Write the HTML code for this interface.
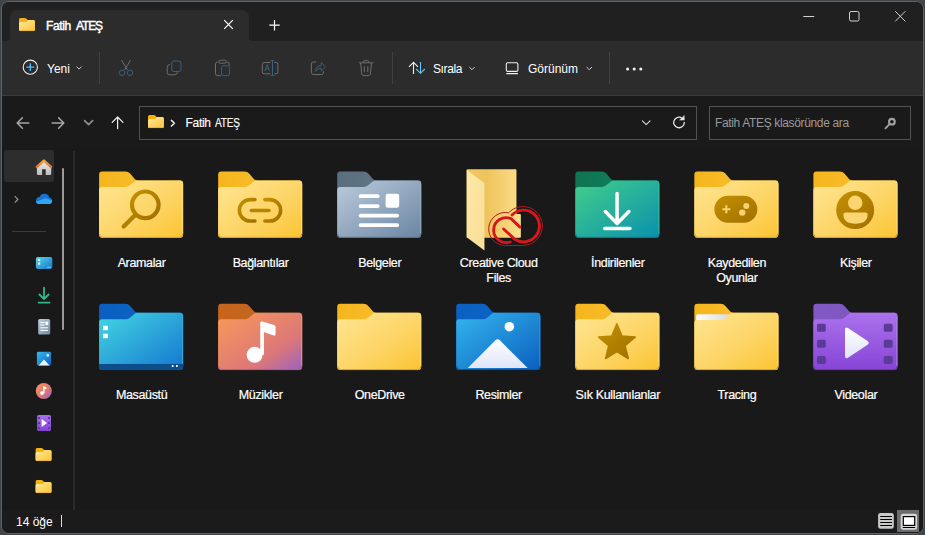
<!DOCTYPE html>
<html><head><meta charset="utf-8">
<style>
*{margin:0;padding:0;box-sizing:border-box}
html,body{width:925px;height:535px;overflow:hidden;background:#3f4549;font-family:"Liberation Sans",sans-serif;color:#fff}
#frame{position:absolute;left:1px;top:1px;width:923px;height:533px;border:1px solid #5d6468;border-radius:8px}
#c{position:absolute;left:0;top:0;width:925px;height:535px;clip-path:inset(2px 2px 2px 2px round 7px);background:#1a1a1a}
.a{position:absolute}
.t{position:absolute;white-space:nowrap;font-size:12px;line-height:14px}
.lb{position:absolute;width:119px;text-align:center;white-space:nowrap;font-size:12.5px;line-height:14px;letter-spacing:-0.35px;color:#fff;-webkit-text-stroke:0.2px #fff}
.sep{position:absolute;width:1px;background:#404040}
svg{position:absolute;overflow:visible}
</style></head><body>
<div id="frame"></div>
<div id="c">
 <!-- title bar -->
 <div class="a" style="left:0;top:0;width:925px;height:41px;background:#202020"></div>
 <div class="a" style="left:10px;top:10px;width:239px;height:31px;background:#2c2c2c;border-radius:7px 7px 0 0"></div>
 <svg style="left:0;top:0" width="925" height="45">
  <path d="M6,41 Q10,41 10,37 L10,41 Z" fill="#2c2c2c"/>
  <path d="M253,41 Q249,41 249,37 L249,41 Z" fill="#2c2c2c"/>
 </svg>
 <!-- toolbar -->
 <div class="a" style="left:0;top:41px;width:925px;height:55px;background:#2c2c2c;border-bottom:1px solid #3b3b3b"></div>
 <div class="sep" style="left:99px;top:52px;height:32px"></div>
 <div class="sep" style="left:392px;top:52px;height:32px"></div>
 <div class="sep" style="left:609px;top:52px;height:32px"></div>
 <div class="t" style="left:46px;top:19px;letter-spacing:-0.35px;word-spacing:2px;-webkit-text-stroke:0.45px #fff">Fatih <span style="letter-spacing:-1.1px">ATEŞ</span></div>
 <div class="t" style="left:47px;top:62px">Yeni</div>
 <div class="t" style="left:433px;top:62px;letter-spacing:-0.4px">Sırala</div>
 <div class="t" style="left:528px;top:62px">Görünüm</div>
 <!-- address row -->
 <div class="a" style="left:139px;top:106px;width:558px;height:34px;border:1px solid #525252;background:#1a1a1a"></div>
 <div class="a" style="left:709px;top:106px;width:202px;height:34px;border:1px solid #525252;background:#1a1a1a"></div>
 <div class="t" style="left:185.5px;top:116px;letter-spacing:-0.3px;word-spacing:1px;-webkit-text-stroke:0.15px #fff">Fatih <span style="display:inline-block;transform:scaleX(0.84);transform-origin:0 0;letter-spacing:-0.2px">ATEŞ</span></div>
 <div class="t" style="left:715px;top:116px;color:#9a9a9a;letter-spacing:-0.35px">Fatih ATEŞ klasöründe ara</div>
 <!-- content bg -->
 <div class="a" style="left:0;top:148.5px;width:925px;height:361px;background:#191919"></div>
 <!-- nav pane -->
 <div class="a" style="left:4px;top:150px;width:50px;height:32px;background:#2d2d2d;border-radius:2px"></div>
 <div class="a" style="left:62px;top:168px;width:2px;height:162px;background:#9b9b9b;border-radius:1px"></div>
 <div class="a" style="left:72.5px;top:150.5px;width:2px;height:359px;background:#2a2a2a"></div>
 <div class="a" style="left:12px;top:231px;width:34px;height:1px;background:#3a3a3a"></div>
 <!-- status -->
 <div class="a" style="left:0;top:509.5px;width:925px;height:26px;background:#1b1b1b"></div>
 <div class="t" style="left:16px;top:515px">14 öğe</div>
 <div class="a" style="left:61px;top:515px;width:1px;height:12px;background:#ddd"></div>
<svg style="left:0;top:0" width="925" height="535">
<defs>
 <linearGradient id="sfb" x1="0" y1="0" x2="1" y2="1"><stop offset="0" stop-color="#ffe89a"/><stop offset="1" stop-color="#fcc43a"/></linearGradient>
 <linearGradient id="sdesk" x1="0" y1="0" x2="1" y2="1"><stop offset="0" stop-color="#4fd8e6"/><stop offset="1" stop-color="#1676d0"/></linearGradient>
 <linearGradient id="sdoc" x1="0" y1="0" x2="1" y2="1"><stop offset="0" stop-color="#c2d0e0"/><stop offset="1" stop-color="#6d88a4"/></linearGradient>
 <linearGradient id="spic" x1="0" y1="0" x2="1" y2="1"><stop offset="0" stop-color="#36b9f0"/><stop offset="1" stop-color="#0b61c0"/></linearGradient>
 <linearGradient id="smus" x1="0" y1="0" x2="1" y2="1"><stop offset="0" stop-color="#f59a58"/><stop offset="0.6" stop-color="#d9777c"/><stop offset="1" stop-color="#9060c6"/></linearGradient>
 <linearGradient id="svid" x1="0" y1="0" x2="0" y2="1"><stop offset="0" stop-color="#a870ea"/><stop offset="1" stop-color="#8544d4"/></linearGradient>
 <linearGradient id="shome" x1="0" y1="0" x2="0" y2="1"><stop offset="0" stop-color="#e8e8e8"/><stop offset="1" stop-color="#bdbdbd"/></linearGradient>
 <linearGradient id="sroof" x1="0" y1="0" x2="0" y2="1"><stop offset="0" stop-color="#f4a447"/><stop offset="1" stop-color="#d9732c"/></linearGradient>
 <g id="smallfolder">
  <path d="M0,1.6 Q0,0 1.6,0 H5.8 Q6.6,0 7.2,0.6 L8.6,2.1 H14.3 Q15.9,2.1 15.9,3.7 V11.5 Q15.9,13.1 14.3,13.1 H1.6 Q0,13.1 0,11.5 Z" fill="#f3b20e"/>
  <path d="M0,5.6 Q0,4.1 1.5,4.1 H6.4 Q7.2,4.1 7.8,3.4 L8.6,2.1 H14.3 Q15.9,2.1 15.9,3.7 V11.5 Q15.9,13.1 14.3,13.1 H1.6 Q0,13.1 0,11.5 Z" fill="url(#sfb)"/>
  <path d="M1.2,12.6 H14.7" stroke="#e3a82c" stroke-width="0.7"/>
 </g>
</defs>
<!-- tab folder -->
<use href="#smallfolder" x="19" y="18"/>
<!-- tab close / plus -->
<g stroke="#ffffff" stroke-width="1.2" fill="none">
 <path d="M224.2,20.2 L232.8,28.8 M232.8,20.2 L224.2,28.8"/>
 <path d="M269.3,25.2 H279.7 M274.5,20 V30.4"/>
</g>
<!-- window controls -->
<g stroke="#d0d0d0" stroke-width="1" fill="none">
 <path d="M803.3,16.5 H814.2"/>
 <rect x="849.5" y="11.5" width="9.5" height="9.5" rx="1.5"/>
 <path d="M895.2,11.2 L905.4,21.4 M905.4,11.2 L895.2,21.4"/>
</g>
<!-- New -->
<circle cx="30.3" cy="67.2" r="7.1" fill="none" stroke="#f0f0f0" stroke-width="1.1"/>
<path d="M26.4,67.2 H34.2 M30.3,63.3 V71.1" stroke="#4cc2ff" stroke-width="1.3"/>
<path d="M76.6,66.6 L79.1,69.1 L81.6,66.6" stroke="#cfcfcf" stroke-width="1" fill="none"/>
<!-- disabled icons -->
<g fill="none" stroke-width="1">
 <!-- scissors -->
 <path d="M121.5,60 L127.4,70 M130.5,60 L124.6,70" stroke="#6e6e6e"/>
 <circle cx="122.1" cy="72.8" r="2.7" stroke="#36617f"/>
 <circle cx="130" cy="72.8" r="2.7" stroke="#36617f"/>
 <!-- copy -->
 <rect x="171.8" y="61" width="9.2" height="10.5" rx="2" stroke="#36617f"/>
 <path d="M169.8,64.3 Q167.2,64.8 167.2,67.5 V72.6 Q167.2,74.8 169.6,74.8 H174.3 Q176.9,74.8 177.6,72.1" stroke="#6e6e6e"/>
 <!-- paste -->
 <path d="M218.6,62 H217.4 Q215.5,62 215.5,64 V73.6 Q215.5,75.6 217.5,75.6 H220.8 M226.4,62 H227.4 Q229.2,62 229.2,64 V65.6" stroke="#6e6e6e"/>
 <rect x="218.8" y="60.2" width="7.4" height="3" rx="1.4" stroke="#6e6e6e"/>
 <rect x="221.6" y="65.8" width="7.8" height="9.8" rx="1.6" stroke="#36617f"/>
 <!-- rename -->
 <path d="M270.4,62.5 H264.2 Q262.3,62.5 262.3,64.5 V71.8 Q262.3,73.8 264.2,73.8 H270.4 M274.6,62.5 H276 Q277.9,62.5 277.9,64.5 V71.8 Q277.9,73.8 276,73.8 H274.6" stroke="#6e6e6e"/>
 <path d="M272.5,60.5 V75.6 M270.6,60.6 H274.4 M270.6,75.5 H274.4" stroke="#36617f"/>
 <path d="M264.8,71 L267.1,64.6 L269.4,71 M265.6,68.9 H268.6" stroke="#36617f" stroke-width="1"/>
 <!-- share -->
 <path d="M316.2,62 H313.4 Q311.4,62 311.4,64 V72.6 Q311.4,74.6 313.4,74.6 H321.4 Q323.4,74.6 323.4,72.6 V71.2" stroke="#6e6e6e"/>
 <path d="M315.5,71.3 Q315.8,65.6 321.2,65.6 V62.6 L325.6,66.8 L321.2,71 V68.2 Q317.7,68.3 315.5,71.3 Z" stroke="#36617f"/>
 <!-- delete -->
 <path d="M358.9,62.8 H373.2 M363.2,62.6 Q363.2,60.6 365,60.6 H367.1 Q368.9,60.6 368.9,62.6 M360.6,63 L361.8,73.9 Q362,75.6 363.8,75.6 H368.3 Q370.1,75.6 370.3,73.9 L371.5,63 M364.3,66.2 V72.2 M367.8,66.2 V72.2" stroke="#6e6e6e"/>
</g>
<!-- sort -->
<g fill="none" stroke-width="1.15">
 <path d="M413.5,73.9 V62.4 M409,66.9 L413.5,62.4 L418,66.9" stroke="#eeeeee" stroke-width="1.1"/>
 <path d="M420.5,62 V73.3 M416.2,69 L420.5,73.3 L424.8,69" stroke="#62c3f5" stroke-width="1.1"/>
 <path d="M469.3,67 L472,69.7 L474.7,67" stroke="#cfcfcf" stroke-width="1"/>
 <rect x="506.3" y="62.8" width="11.6" height="8.6" rx="1.4" stroke="#f0f0f0" stroke-width="1.1"/>
 <path d="M506.3,73.6 H517.9" stroke="#f0f0f0" stroke-width="1.1"/>
 <path d="M586.6,67 L589.3,69.7 L592,67" stroke="#cfcfcf" stroke-width="1"/>
</g>
<g fill="#f0f0f0"><circle cx="627.6" cy="69" r="1.55"/><circle cx="634.2" cy="69" r="1.55"/><circle cx="640.8" cy="69" r="1.55"/></g>
<!-- nav arrows -->
<g fill="none" stroke-width="1.2" stroke-linecap="round" stroke-linejoin="round">
 <path d="M28.8,123 H17.4 M22.4,117.8 L17.2,123 L22.4,128.2" stroke="#a6a6a6" stroke-width="1.6"/>
 <path d="M52.2,123 H63.6 M58.6,117.8 L63.8,123 L58.6,128.2" stroke="#a6a6a6" stroke-width="1.6"/>
 <path d="M84.6,120.6 L88.6,124.6 L92.6,120.6" stroke="#8e8e8e" stroke-width="1.7"/>
 <path d="M117.6,128.6 V117 M112.2,122.4 L117.6,117 L123,122.4" stroke="#f0f0f0"/>
 <path d="M171.4,120.4 L174.4,123.2 L171.4,126" stroke="#f0f0f0" stroke-width="1.5"/>
 <path d="M642.4,120.8 L646.2,124.6 L650,120.8" stroke="#d0d0d0"/>
 <path d="M682.2,118.2 A5.3,5.3 0 1 0 684.3,122.4" stroke="#e8e8e8" stroke-width="1.3"/>
 <path d="M684.2,115.9 V120 H680 Z" fill="#e8e8e8" stroke="#e8e8e8" stroke-width="0.6"/>
 <circle cx="891.9" cy="121.7" r="2.85" stroke="#a2a2a2" stroke-width="2.1"/>
 <path d="M889,124.7 L885.5,128.3" stroke="#a2a2a2" stroke-width="1.9"/>
</g>
<use href="#smallfolder" x="148" y="115"/>
<!-- nav pane icons -->
<path d="M36.9,166.5 V173.4 Q36.9,174.9 38.4,174.9 H42.1 V169.2 H45.7 V174.9 H49.7 Q51.2,174.9 51.2,173.4 V166.5 L43.9,161.6 Z" fill="url(#shome)"/>
<path d="M36.8,166.9 L43.9,160.6 L51,166.9" fill="none" stroke="url(#sroof)" stroke-width="2.5" stroke-linecap="round" stroke-linejoin="round"/>
<path d="M14.8,196.2 L17.9,199.4 L14.8,202.6" fill="none" stroke="#9a9a9a" stroke-width="1.2"/>
<path d="M39,204 C36.8,204 35.9,202.4 35.9,200.8 C35.9,198.6 37.6,197 39.6,197 C40.4,194.9 42.3,193.8 44.5,193.8 C47,193.8 48.8,195.4 49.4,197.6 C51.2,197.9 52.2,199.3 52.2,200.9 C52.2,202.6 51,204 49,204 Z" fill="#1774d2"/>
<path d="M39,204 C37,204 36,202.8 35.9,201.7 L45.6,198.3 L52.2,200.6 C52.2,202.6 51,204 49,204 Z" fill="#30a6ee"/>
<rect x="35.9" y="257" width="16.4" height="11.9" rx="1.8" fill="url(#sdesk)"/>
<rect x="38" y="259" width="2.2" height="2" fill="#fff"/><rect x="38" y="262.6" width="2.2" height="2" fill="#fff"/>
<rect x="47.6" y="266.8" width="1" height="1" fill="#fff"/><rect x="49.6" y="266.8" width="1" height="1" fill="#fff"/>
<g fill="none" stroke="#2fb68a" stroke-width="1.8" stroke-linecap="round" stroke-linejoin="round">
 <path d="M44,287.6 V299 M39.4,294.5 L44,299 L48.6,294.5 M38.6,302.6 H49.5"/>
</g>
<rect x="38.2" y="319" width="12" height="15.6" rx="1.6" fill="url(#sdoc)"/>
<path d="M40.4,322.5 H44.5 M40.4,325 H44.5 M40.4,327.8 H48 M40.4,330.4 H48" stroke="#fff" stroke-width="1"/>
<rect x="45.4" y="321.6" width="2.8" height="3.4" fill="#fff"/>
<rect x="36.9" y="351.8" width="14.2" height="13.7" rx="1.4" fill="url(#spic)"/>
<circle cx="47.8" cy="355.4" r="1.3" fill="#fff"/>
<path d="M38.6,365.5 L44,359.4 L49.5,365.5 Z" fill="#eef2ff"/>
<circle cx="43.8" cy="391" r="8" fill="url(#smus)"/>
<path d="M42,395 A1.9,1.9 0 1 1 42,391.2 A1.9,1.9 0 1 1 42,395 Z M43.3,393 V386.2 L46.3,387.2 V389.3 L44.6,388.7 V393 Z" fill="#fff"/>
<rect x="37.1" y="415" width="13.9" height="16" rx="1.6" fill="url(#svid)"/>
<g fill="#5b3a98"><rect x="38.1" y="417" width="1.8" height="2"/><rect x="38.1" y="422" width="1.8" height="2"/><rect x="38.1" y="427" width="1.8" height="2"/><rect x="48.2" y="417" width="1.8" height="2"/><rect x="48.2" y="422" width="1.8" height="2"/><rect x="48.2" y="427" width="1.8" height="2"/></g>
<path d="M41.6,419 L47,423 L41.6,427 Z" fill="#fff"/>
<use href="#smallfolder" x="35.6" y="448"/>
<use href="#smallfolder" x="35.6" y="480"/>
<!-- status view buttons -->
<rect x="878.1" y="512.9" width="15.7" height="15.9" rx="2.4" fill="#c8c8c8"/>
<g stroke="#000" stroke-width="1"><path d="M880.2,516.5 H892 M880.2,519.5 H892 M880.2,522.5 H892 M880.2,525.5 H892"/></g>
<rect x="897" y="510" width="22" height="22" fill="#6b6b6b"/>
<rect x="900.7" y="513.7" width="16.4" height="16.1" rx="2.4" fill="#d6d6d6"/>
<rect x="903.3" y="516.6" width="11.4" height="8.8" fill="#fff" stroke="#000" stroke-width="1.2"/>
<path d="M902.7,527.5 H915.2" stroke="#000" stroke-width="1"/>
</svg>

<svg style="left:0;top:0" width="925" height="535"><defs><linearGradient id="yb" x1="0" y1="0" x2="1" y2="0"><stop offset="0" stop-color="#f5b51c"/><stop offset="1" stop-color="#fcc53a"/></linearGradient><linearGradient id="yf" x1="0" y1="0" x2="1" y2="1"><stop offset="0" stop-color="#ffe592"/><stop offset="0.55" stop-color="#fdd567"/><stop offset="1" stop-color="#fbc432"/></linearGradient><linearGradient id="bb" x1="0" y1="0" x2="1" y2="0"><stop offset="0" stop-color="#5a6f7e"/><stop offset="1" stop-color="#657a8a"/></linearGradient><linearGradient id="bf" x1="0" y1="0" x2="1" y2="1"><stop offset="0" stop-color="#bccbdc"/><stop offset="1" stop-color="#6a86a3"/></linearGradient><linearGradient id="db" x1="0" y1="0" x2="1" y2="0"><stop offset="0" stop-color="#0f7552"/><stop offset="1" stop-color="#128060"/></linearGradient><linearGradient id="df" x1="0" y1="0" x2="1" y2="1"><stop offset="0" stop-color="#43cf8a"/><stop offset="1" stop-color="#0a90ad"/></linearGradient><linearGradient id="mb" x1="0" y1="0" x2="1" y2="0"><stop offset="0" stop-color="#0a5fc0"/><stop offset="1" stop-color="#0e68c8"/></linearGradient><linearGradient id="mf" x1="0" y1="0" x2="1" y2="1"><stop offset="0" stop-color="#44d6e2"/><stop offset="1" stop-color="#1476d0"/></linearGradient><linearGradient id="ub" x1="0" y1="0" x2="1" y2="0"><stop offset="0" stop-color="#c9641a"/><stop offset="1" stop-color="#b8682a"/></linearGradient><linearGradient id="uf" x1="0" y1="0" x2="1" y2="1"><stop offset="0" stop-color="#f89a58"/><stop offset="0.68" stop-color="#dc7779"/><stop offset="1" stop-color="#9a62c2"/></linearGradient><linearGradient id="pb" x1="0" y1="0" x2="1" y2="0"><stop offset="0" stop-color="#0a61c2"/><stop offset="1" stop-color="#0b65c6"/></linearGradient><linearGradient id="pf" x1="0" y1="0" x2="1" y2="1"><stop offset="0" stop-color="#34b6ee"/><stop offset="1" stop-color="#0b5fbe"/></linearGradient><linearGradient id="vb" x1="0" y1="0" x2="1" y2="0"><stop offset="0" stop-color="#8358c6"/><stop offset="1" stop-color="#7a56b8"/></linearGradient><linearGradient id="vf" x1="0" y1="0" x2="0" y2="1"><stop offset="0" stop-color="#aa72ec"/><stop offset="1" stop-color="#8744d6"/></linearGradient><linearGradient id="glyph" x1="0" y1="0" x2="1" y2="1"><stop offset="0" stop-color="#c49000"/><stop offset="1" stop-color="#a07000"/></linearGradient><linearGradient id="white" x1="0" y1="0" x2="0" y2="1"><stop offset="0" stop-color="#ffffff"/><stop offset="1" stop-color="#dfe4f8"/></linearGradient><linearGradient id="paper" x1="0" y1="0" x2="1" y2="0"><stop offset="0" stop-color="#ffffff"/><stop offset="1" stop-color="#d9d9d9"/></linearGradient><linearGradient id="ccfront" x1="0" y1="0" x2="1" y2="1"><stop offset="0" stop-color="#fde8a8"/><stop offset="1" stop-color="#f9df96"/></linearGradient><linearGradient id="ccback" x1="0" y1="0" x2="1" y2="0"><stop offset="0" stop-color="#f3c85c"/><stop offset="0.36" stop-color="#edc35c"/><stop offset="1" stop-color="#fddf8c"/></linearGradient></defs><g transform="translate(99.1,171.4)"><path d="M0,3 Q0,0 3,0 H26 C28.4,0 29.7,0.7 31,2.2 L35,6.9 C36.1,8.3 37.1,9 39,9 H81 Q84,9 84,12 V62.9 Q84,66.4 80.5,66.4 H3.5 Q0,66.4 0,62.9 Z" fill="url(#yb)"/><path d="M0,18.5 Q0,15.5 3,15.5 H26.5 C28.5,15.5 29.8,14.9 31.2,13.7 L35.3,10.3 C36.3,9.4 37.3,9 39,9 H81 Q84,9 84,12 V62.9 Q84,66.4 80.5,66.4 H3.5 Q0,66.4 0,62.9 Z" fill="url(#yf)"/><path d="M0.5,62.6 Q0.5,65.9 3.5,65.9 H80.5 Q83.5,65.9 83.5,62.6" fill="none" stroke="#dc9e24" stroke-width="1"/><path d="M83.5,12.5 V62" stroke="#ffe184" stroke-width="1" opacity="0.8"/><circle cx="46.2" cy="33.4" r="13.3" fill="none" stroke="url(#glyph)" stroke-width="4.2"/><path d="M36.6,43 L24.5,55.2" stroke="url(#glyph)" stroke-width="4.2" stroke-linecap="round"/></g><g transform="translate(218.15,171.4)"><path d="M0,3 Q0,0 3,0 H26 C28.4,0 29.7,0.7 31,2.2 L35,6.9 C36.1,8.3 37.1,9 39,9 H81 Q84,9 84,12 V62.9 Q84,66.4 80.5,66.4 H3.5 Q0,66.4 0,62.9 Z" fill="url(#yb)"/><path d="M0,18.5 Q0,15.5 3,15.5 H26.5 C28.5,15.5 29.8,14.9 31.2,13.7 L35.3,10.3 C36.3,9.4 37.3,9 39,9 H81 Q84,9 84,12 V62.9 Q84,66.4 80.5,66.4 H3.5 Q0,66.4 0,62.9 Z" fill="url(#yf)"/><path d="M0.5,62.6 Q0.5,65.9 3.5,65.9 H80.5 Q83.5,65.9 83.5,62.6" fill="none" stroke="#dc9e24" stroke-width="1"/><path d="M83.5,12.5 V62" stroke="#ffe184" stroke-width="1" opacity="0.8"/><path d="M36.8,28.2 H31.9 A10.7,10.7 0 0 0 31.9,49.6 H36.8" fill="none" stroke="url(#glyph)" stroke-width="3.6" stroke-linecap="round"/><path d="M46.7,28.2 H51.8 A10.7,10.7 0 0 1 51.8,49.6 H46.7" fill="none" stroke="url(#glyph)" stroke-width="3.6" stroke-linecap="round"/><path d="M33.2,39.1 H50.8" stroke="#b88500" stroke-width="3.6" stroke-linecap="round"/></g><g transform="translate(337.2,171.4)"><path d="M0,3 Q0,0 3,0 H26 C28.4,0 29.7,0.7 31,2.2 L35,6.9 C36.1,8.3 37.1,9 39,9 H81 Q84,9 84,12 V62.9 Q84,66.4 80.5,66.4 H3.5 Q0,66.4 0,62.9 Z" fill="url(#bb)"/><path d="M0,18.5 Q0,15.5 3,15.5 H26.5 C28.5,15.5 29.8,14.9 31.2,13.7 L35.3,10.3 C36.3,9.4 37.3,9 39,9 H81 Q84,9 84,12 V62.9 Q84,66.4 80.5,66.4 H3.5 Q0,66.4 0,62.9 Z" fill="url(#bf)"/><path d="M0.5,62.6 Q0.5,65.9 3.5,65.9 H80.5 Q83.5,65.9 83.5,62.6" fill="none" stroke="#56708a" stroke-width="1"/><path d="M83.5,12.5 V62" stroke="#9fb4c8" stroke-width="1" opacity="0.8"/><g stroke="#fff" stroke-width="3.8" stroke-linecap="round"><path d="M23.3,24.8 H40.5 M23.3,34.7 H40.5 M23.3,44.2 H60 M23.3,53.8 H60"/></g><rect x="48.4" y="22.3" width="13.6" height="14" rx="2.2" fill="#fff"/></g><g transform="translate(456.25,171.4)"><path d="M11.5,-2.1 H59.2 Q60.2,-2.1 60.2,-1.1 V42.6 H63.6 Q64.6,42.6 64.6,43.6 V65.3 Q64.6,66.3 63.6,66.3 H10.45 V-1.1 Q10.45,-2.1 11.5,-2.1 Z" fill="url(#ccback)"/><path d="M10.45,-1.6 L28.2,11.7 V79.2 L10.45,65.9 Z" fill="url(#ccfront)"/><path d="M49.05,74.1 H66.95 A19.5,19.5 0 1 0 52.31,41.44 A16.5,16.5 0 1 0 49.05,74.1 Z" fill="none" stroke="#b8141a" stroke-width="1"/><g fill="none" stroke="#d8161d" stroke-width="2.9" stroke-linecap="round"><path d="M55.75,43.6 A15.9,15.9 0 1 1 58.55,67.9 L47.35,57.6"/><path d="M63.75,55.7 L54.85,47.3 A12.5,12.5 0 1 0 53.95,70.6"/></g></g><g transform="translate(575.3,171.4)"><path d="M0,3 Q0,0 3,0 H26 C28.4,0 29.7,0.7 31,2.2 L35,6.9 C36.1,8.3 37.1,9 39,9 H81 Q84,9 84,12 V62.9 Q84,66.4 80.5,66.4 H3.5 Q0,66.4 0,62.9 Z" fill="url(#db)"/><path d="M0,18.5 Q0,15.5 3,15.5 H26.5 C28.5,15.5 29.8,14.9 31.2,13.7 L35.3,10.3 C36.3,9.4 37.3,9 39,9 H81 Q84,9 84,12 V62.9 Q84,66.4 80.5,66.4 H3.5 Q0,66.4 0,62.9 Z" fill="url(#df)"/><path d="M0.5,62.6 Q0.5,65.9 3.5,65.9 H80.5 Q83.5,65.9 83.5,62.6" fill="none" stroke="#0b7a8a" stroke-width="1"/><path d="M83.5,12.5 V62" stroke="#3cc0a0" stroke-width="1" opacity="0.8"/><g stroke="#fff" stroke-width="3.5" stroke-linecap="round" stroke-linejoin="round" fill="none"><path d="M41.8,22.2 V51 M30,40.2 L41.8,52 L53.6,40.2"/><path d="M29.5,57 H54.6"/></g></g><g transform="translate(694.35,171.4)"><path d="M0,3 Q0,0 3,0 H26 C28.4,0 29.7,0.7 31,2.2 L35,6.9 C36.1,8.3 37.1,9 39,9 H81 Q84,9 84,12 V62.9 Q84,66.4 80.5,66.4 H3.5 Q0,66.4 0,62.9 Z" fill="url(#yb)"/><path d="M0,18.5 Q0,15.5 3,15.5 H26.5 C28.5,15.5 29.8,14.9 31.2,13.7 L35.3,10.3 C36.3,9.4 37.3,9 39,9 H81 Q84,9 84,12 V62.9 Q84,66.4 80.5,66.4 H3.5 Q0,66.4 0,62.9 Z" fill="url(#yf)"/><path d="M0.5,62.6 Q0.5,65.9 3.5,65.9 H80.5 Q83.5,65.9 83.5,62.6" fill="none" stroke="#dc9e24" stroke-width="1"/><path d="M83.5,12.5 V62" stroke="#ffe184" stroke-width="1" opacity="0.8"/><rect x="20" y="24.4" width="43" height="27" rx="13.5" fill="url(#glyph)"/><path d="M28,37.9 H36 M32,33.9 V41.9" stroke="#f7d270" stroke-width="2" /><circle cx="51.9" cy="34.6" r="3" fill="#f7d270"/><circle cx="47.9" cy="41.2" r="3.2" fill="#f7d270"/></g><g transform="translate(813.4,171.4)"><path d="M0,3 Q0,0 3,0 H26 C28.4,0 29.7,0.7 31,2.2 L35,6.9 C36.1,8.3 37.1,9 39,9 H81 Q84,9 84,12 V62.9 Q84,66.4 80.5,66.4 H3.5 Q0,66.4 0,62.9 Z" fill="url(#yb)"/><path d="M0,18.5 Q0,15.5 3,15.5 H26.5 C28.5,15.5 29.8,14.9 31.2,13.7 L35.3,10.3 C36.3,9.4 37.3,9 39,9 H81 Q84,9 84,12 V62.9 Q84,66.4 80.5,66.4 H3.5 Q0,66.4 0,62.9 Z" fill="url(#yf)"/><path d="M0.5,62.6 Q0.5,65.9 3.5,65.9 H80.5 Q83.5,65.9 83.5,62.6" fill="none" stroke="#dc9e24" stroke-width="1"/><path d="M83.5,12.5 V62" stroke="#ffe184" stroke-width="1" opacity="0.8"/><circle cx="41.8" cy="38.7" r="19" fill="url(#glyph)"/><circle cx="41.8" cy="31.4" r="7.2" fill="#fbd56f"/><path d="M30,43.1 Q30,41.1 32,41.1 H52.2 Q54.2,41.1 54.2,43.1 Q54.2,52.3 42.1,52.3 Q30,52.3 30,43.1 Z" fill="#fbd56f"/></g><g transform="translate(99.1,303.7)"><path d="M0,3 Q0,0 3,0 H26 C28.4,0 29.7,0.7 31,2.2 L35,6.9 C36.1,8.3 37.1,9 39,9 H81 Q84,9 84,12 V62.9 Q84,66.4 80.5,66.4 H3.5 Q0,66.4 0,62.9 Z" fill="url(#mb)"/><path d="M0,18.5 Q0,15.5 3,15.5 H26.5 C28.5,15.5 29.8,14.9 31.2,13.7 L35.3,10.3 C36.3,9.4 37.3,9 39,9 H81 Q84,9 84,12 V62.9 Q84,66.4 80.5,66.4 H3.5 Q0,66.4 0,62.9 Z" fill="url(#mf)"/><path d="M0.5,62.6 Q0.5,65.9 3.5,65.9 H80.5 Q83.5,65.9 83.5,62.6" fill="none" stroke="#0d4a86" stroke-width="1"/><path d="M83.5,12.5 V62" stroke="#3ab0e0" stroke-width="1" opacity="0.8"/><path d="M0,60.2 H84 V63.4 Q84,66.4 81,66.4 H3 Q0,66.4 0,63.4 Z" fill="#0d4e8a"/><rect x="3.9" y="22" width="4.8" height="4.5" fill="#fff"/><rect x="3.9" y="30" width="4.8" height="4.5" fill="#fff"/><rect x="72.7" y="61.4" width="1.8" height="1.8" fill="#fff"/><rect x="76.9" y="61.4" width="1.8" height="1.8" fill="#fff"/></g><g transform="translate(218.15,303.7)"><path d="M0,3 Q0,0 3,0 H26 C28.4,0 29.7,0.7 31,2.2 L35,6.9 C36.1,8.3 37.1,9 39,9 H81 Q84,9 84,12 V62.9 Q84,66.4 80.5,66.4 H3.5 Q0,66.4 0,62.9 Z" fill="url(#ub)"/><path d="M0,18.5 Q0,15.5 3,15.5 H26.5 C28.5,15.5 29.8,14.9 31.2,13.7 L35.3,10.3 C36.3,9.4 37.3,9 39,9 H81 Q84,9 84,12 V62.9 Q84,66.4 80.5,66.4 H3.5 Q0,66.4 0,62.9 Z" fill="url(#uf)"/><path d="M0.5,62.6 Q0.5,65.9 3.5,65.9 H80.5 Q83.5,65.9 83.5,62.6" fill="none" stroke="#b06078" stroke-width="1"/><path d="M83.5,12.5 V62" stroke="#eea08c" stroke-width="1" opacity="0.8"/><circle cx="36.5" cy="51.1" r="8" fill="#fff"/><path d="M42.1,51 V19.3 Q42.1,17.4 44,17.8 L55.8,21.2 Q57.4,21.7 57.4,23.4 V30.6 Q57.4,32.4 55.6,31.8 L45.8,28.2 V51 Z" fill="#fff"/></g><g transform="translate(337.2,303.7)"><path d="M0,3 Q0,0 3,0 H26 C28.4,0 29.7,0.7 31,2.2 L35,6.9 C36.1,8.3 37.1,9 39,9 H81 Q84,9 84,12 V62.9 Q84,66.4 80.5,66.4 H3.5 Q0,66.4 0,62.9 Z" fill="url(#yb)"/><path d="M0,18.5 Q0,15.5 3,15.5 H26.5 C28.5,15.5 29.8,14.9 31.2,13.7 L35.3,10.3 C36.3,9.4 37.3,9 39,9 H81 Q84,9 84,12 V62.9 Q84,66.4 80.5,66.4 H3.5 Q0,66.4 0,62.9 Z" fill="url(#yf)"/><path d="M0.5,62.6 Q0.5,65.9 3.5,65.9 H80.5 Q83.5,65.9 83.5,62.6" fill="none" stroke="#dc9e24" stroke-width="1"/><path d="M83.5,12.5 V62" stroke="#ffe184" stroke-width="1" opacity="0.8"/></g><g transform="translate(456.25,303.7)"><path d="M0,3 Q0,0 3,0 H26 C28.4,0 29.7,0.7 31,2.2 L35,6.9 C36.1,8.3 37.1,9 39,9 H81 Q84,9 84,12 V62.9 Q84,66.4 80.5,66.4 H3.5 Q0,66.4 0,62.9 Z" fill="url(#pb)"/><path d="M0,18.5 Q0,15.5 3,15.5 H26.5 C28.5,15.5 29.8,14.9 31.2,13.7 L35.3,10.3 C36.3,9.4 37.3,9 39,9 H81 Q84,9 84,12 V62.9 Q84,66.4 80.5,66.4 H3.5 Q0,66.4 0,62.9 Z" fill="url(#pf)"/><path d="M0.5,62.6 Q0.5,65.9 3.5,65.9 H80.5 Q83.5,65.9 83.5,62.6" fill="none" stroke="#0a4fa0" stroke-width="1"/><path d="M83.5,12.5 V62" stroke="#2e9ee0" stroke-width="1" opacity="0.8"/><circle cx="53.1" cy="23" r="4.8" fill="#fff"/><path d="M11.5,64.4 L39.2,36.6 Q41.4,34.4 43.6,36.6 L71.4,64.4 Z" fill="url(#white)"/></g><g transform="translate(575.3,303.7)"><path d="M0,3 Q0,0 3,0 H26 C28.4,0 29.7,0.7 31,2.2 L35,6.9 C36.1,8.3 37.1,9 39,9 H81 Q84,9 84,12 V62.9 Q84,66.4 80.5,66.4 H3.5 Q0,66.4 0,62.9 Z" fill="url(#yb)"/><path d="M0,18.5 Q0,15.5 3,15.5 H26.5 C28.5,15.5 29.8,14.9 31.2,13.7 L35.3,10.3 C36.3,9.4 37.3,9 39,9 H81 Q84,9 84,12 V62.9 Q84,66.4 80.5,66.4 H3.5 Q0,66.4 0,62.9 Z" fill="url(#yf)"/><path d="M0.5,62.6 Q0.5,65.9 3.5,65.9 H80.5 Q83.5,65.9 83.5,62.6" fill="none" stroke="#dc9e24" stroke-width="1"/><path d="M83.5,12.5 V62" stroke="#ffe184" stroke-width="1" opacity="0.8"/><polygon points="41.60,20.10 46.65,32.34 59.86,33.37 49.78,41.96 52.89,54.83 41.60,47.90 30.31,54.83 33.42,41.96 23.34,33.37 36.55,32.34" fill="url(#glyph)" stroke="url(#glyph)" stroke-width="1.6" stroke-linejoin="round"/></g><g transform="translate(694.35,303.7)"><path d="M0,3 Q0,0 3,0 H26 C28.4,0 29.7,0.7 31,2.2 L35,6.9 C36.1,8.3 37.1,9 39,9 H81 Q84,9 84,12 V62.9 Q84,66.4 80.5,66.4 H3.5 Q0,66.4 0,62.9 Z" fill="url(#yb)"/><rect x="1.8" y="10.6" width="34.5" height="8" rx="1.5" fill="url(#paper)"/><path d="M0,19.2 Q0,16.2 3,16.2 H26.5 C28.5,16.2 29.8,15.6 31.2,14.399999999999999 L35.3,10.3 C36.3,9.4 37.3,9 39,9 H81 Q84,9 84,12 V62.9 Q84,66.4 80.5,66.4 H3.5 Q0,66.4 0,62.9 Z" fill="url(#yf)"/><path d="M0.5,62.6 Q0.5,65.9 3.5,65.9 H80.5 Q83.5,65.9 83.5,62.6" fill="none" stroke="#dc9e24" stroke-width="1"/><path d="M83.5,12.5 V62" stroke="#ffe184" stroke-width="1" opacity="0.8"/></g><g transform="translate(813.4,303.7)"><path d="M0,3 Q0,0 3,0 H26 C28.4,0 29.7,0.7 31,2.2 L35,6.9 C36.1,8.3 37.1,9 39,9 H81 Q84,9 84,12 V62.9 Q84,66.4 80.5,66.4 H3.5 Q0,66.4 0,62.9 Z" fill="url(#vb)"/><path d="M0,18.5 Q0,15.5 3,15.5 H26.5 C28.5,15.5 29.8,14.9 31.2,13.7 L35.3,10.3 C36.3,9.4 37.3,9 39,9 H81 Q84,9 84,12 V62.9 Q84,66.4 80.5,66.4 H3.5 Q0,66.4 0,62.9 Z" fill="url(#vf)"/><path d="M0.5,62.6 Q0.5,65.9 3.5,65.9 H80.5 Q83.5,65.9 83.5,62.6" fill="none" stroke="#6a34b0" stroke-width="1"/><path d="M83.5,12.5 V62" stroke="#b585f0" stroke-width="1" opacity="0.8"/><rect x="3.6" y="20.1" width="8.8" height="8" rx="1.6" fill="#5b3a98"/><rect x="3.6" y="36.1" width="8.8" height="8" rx="1.6" fill="#5b3a98"/><rect x="3.6" y="52.2" width="8.8" height="8" rx="1.6" fill="#5b3a98"/><rect x="70.4" y="20.1" width="8.8" height="8" rx="1.6" fill="#5b3a98"/><rect x="70.4" y="36.1" width="8.8" height="8" rx="1.6" fill="#5b3a98"/><rect x="70.4" y="52.2" width="8.8" height="8" rx="1.6" fill="#5b3a98"/><path d="M31.6,26 Q31.6,22.6 34.6,24.3 L54.2,37.3 Q56.6,39.2 54.2,41.1 L34.6,54.1 Q31.6,55.8 31.6,52.4 Z" fill="url(#white)"/></g></svg>
<div class="lb" style="left:82.1px;top:255.7px">Aramalar</div>
<div class="lb" style="left:201.1px;top:255.7px">Bağlantılar</div>
<div class="lb" style="left:320.2px;top:255.7px">Belgeler</div>
<div class="lb" style="left:439.2px;top:255.7px">Creative Cloud</div>
<div class="lb" style="left:439.2px;top:270.7px">Files</div>
<div class="lb" style="left:558.3px;top:255.7px">İndirilenler</div>
<div class="lb" style="left:677.4px;top:255.7px">Kaydedilen</div>
<div class="lb" style="left:677.4px;top:270.7px">Oyunlar</div>
<div class="lb" style="left:796.4px;top:255.7px">Kişiler</div>
<div class="lb" style="left:82.1px;top:388.0px">Masaüstü</div>
<div class="lb" style="left:201.1px;top:388.0px">Müzikler</div>
<div class="lb" style="left:320.2px;top:388.0px">OneDrive</div>
<div class="lb" style="left:439.2px;top:388.0px">Resimler</div>
<div class="lb" style="left:558.3px;top:388.0px">Sık Kullanılanlar</div>
<div class="lb" style="left:677.4px;top:388.0px">Tracing</div>
<div class="lb" style="left:796.4px;top:388.0px">Videolar</div>
</div>
</body></html>
